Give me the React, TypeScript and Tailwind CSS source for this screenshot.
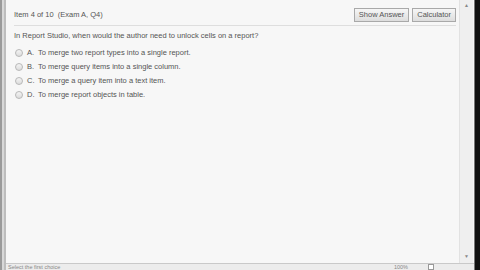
import React from "react";

const choices = [
  { key: "A.", text: "To merge two report types into a single report." },
  { key: "B.", text: "To merge query items into a single column." },
  { key: "C.", text: "To merge a query item into a text item." },
  { key: "D.", text: "To merge report objects in table." },
];

function Radio() {
  return (
    <span className="w-[8px] h-[8px] rounded-full border border-[#b8b8b8] bg-gradient-to-b from-[#f4f4f4] to-[#dcdcdc] shrink-0" />
  );
}

export default function App() {
  return (
    <div className="w-[480px] h-[270px] flex overflow-hidden bg-[#f7f7f7] text-[#555555] font-['Liberation_Sans',Arial,sans-serif]">
      {/* left window edge */}
      <div className="w-[6px] flex">
        <div className="w-[2px] bg-[#9a9a9a]" />
        <div className="w-[2px] bg-[#d8d8d8]" />
        <div className="w-[2px] bg-[#bdbdbd]" />
      </div>

      <div className="flex-1 flex flex-col">
        <div className="flex-1 flex">
          <main className="flex-1 flex flex-col pl-[8px] pr-[3px] pt-[7px]">
            <div className="flex items-center justify-between h-[19px] border-b border-[#dedede] pb-[3px]">
              <span className="text-[7.5px]">Item 4 of 10&nbsp; (Exam A, Q4)</span>
              <div className="flex gap-[3px]">
                <button className="h-[14px] px-[4px] text-[7.5px] text-[#555] border border-[#a9a9a9] bg-gradient-to-b from-[#f6f6f6] to-[#dddddd] leading-none">
                  Show Answer
                </button>
                <button className="h-[14px] px-[4px] text-[7.5px] text-[#555] border border-[#a9a9a9] bg-gradient-to-b from-[#f6f6f6] to-[#dddddd] leading-none">
                  Calculator
                </button>
              </div>
            </div>
            <p className="text-[7.5px] mt-[4px]">
              In Report Studio, when would the author need to unlock cells on a report?
            </p>
            <div className="flex flex-col gap-[4.5px] mt-[7px] pl-[1px]">
              {choices.map((c) => (
                <div key={c.key} className="flex items-center h-[9.5px] text-[7.5px]">
                  <Radio />
                  <span className="w-[12px] pl-[4px]">{c.key}</span>
                  <span className="pl-[3px]">{c.text}</span>
                </div>
              ))}
            </div>
          </main>

          {/* scrollbar */}
          <div className="w-[14px] flex flex-col border-l border-[#e2e2e2] bg-[#efefef] mr-[1px]">
            <div className="h-[12px] flex items-center justify-center text-[5px] text-[#888]">▲</div>
            <div className="flex-1" />
            <div className="h-[12px] flex items-center justify-center text-[5px] text-[#888]">▼</div>
          </div>
        </div>

        {/* status bar */}
        <div className="h-[7px] flex items-start border-t border-[#c9c9c9] bg-[#ececec] text-[5.5px] text-[#888] leading-none">
          <span className="pl-[2px] pt-[1px]">Select the first choice</span>
          <span className="ml-auto pt-[1px] mr-[20px]">100%</span>
          <span className="w-[6px] h-[6px] border border-[#999] bg-white mr-[40px]" />
        </div>
      </div>

      {/* right dark edge */}
      <div className="w-[6px] flex">
        <div className="w-[1px] bg-[#777]" />
        <div className="flex-1 bg-[#111]" />
      </div>
    </div>
  );
}
